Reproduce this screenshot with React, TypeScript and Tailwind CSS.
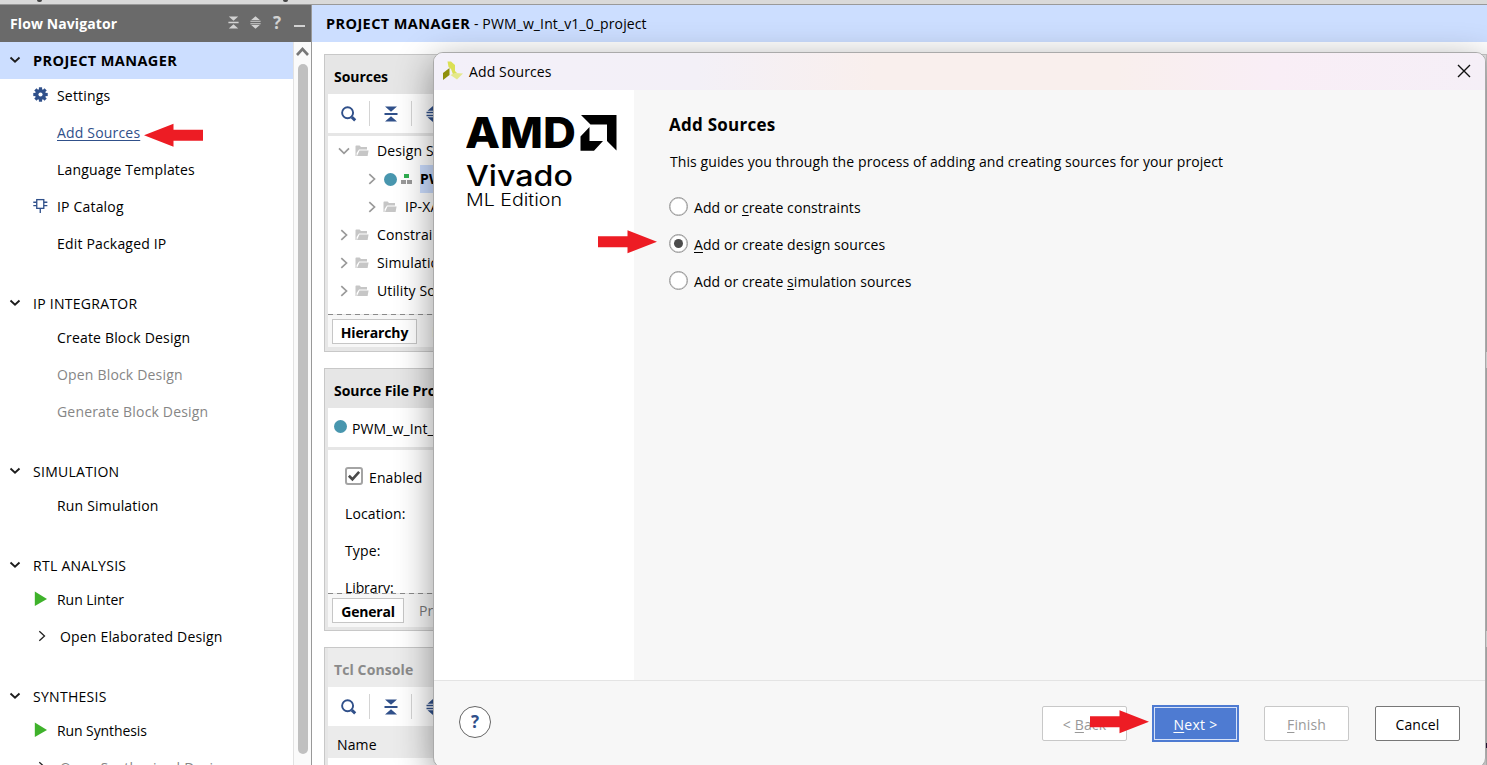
import React from "react";

const FONT = "font-['Open_Sans','Noto_Sans',sans-serif]";

function ChevronDown() {
  return (
    <svg className="ml-[9px] mr-[12px] w-3 h-3 shrink-0" viewBox="0 0 12 12" fill="none" stroke="#1c1c1c" strokeWidth="1.9">
      <path d="M1.5 3.5 L6 7.6 L10.5 3.5" />
    </svg>
  );
}

function Gear() {
  return (
    <svg width="15" height="15" viewBox="-8 -8 16 16" fill="#30508a">
      {[0, 45, 90, 135].map((a) => (
        <rect key={a} x="-1.7" y="-7.7" width="3.4" height="15.4" transform={`rotate(${a})`} />
      ))}
      <circle r="5.8" />
      <circle r="2.2" fill="#fff" />
    </svg>
  );
}

function Chip() {
  return (
    <svg width="16" height="16" viewBox="0 0 16 16" fill="none" stroke="#30508a" strokeWidth="1.4">
      <rect x="4" y="1.2" width="7.5" height="9.3" />
      <path d="M0.3 4H4M0.3 7.6H4M11.5 4H15.3M11.5 7.6H15.3M7.75 10.5V15.5" />
    </svg>
  );
}

function Play() {
  return (
    <svg width="14" height="16" viewBox="0 0 14 16">
      <path d="M0.8 0.5 L13 8 L0.8 15 Z" fill="#3fb22b" />
    </svg>
  );
}

function Right({ color = "#222", w = 1.3 }: { color?: string; w?: number }) {
  return (
    <svg className="shrink-0" width="8" height="12" viewBox="0 0 8 12" fill="none" stroke={color} strokeWidth={w}>
      <path d="M1.3 1.2 L6.5 6 L1.3 10.8" />
    </svg>
  );
}

function Collapse({ color, size }: { color: string; size: number }) {
  return (
    <svg className="shrink-0" width={size} height={size + 2} viewBox="0 0 14 16" fill={color}>
      <path d="M1 0.5H13L7 5.8Z M0.5 7.1H13.5V8.9H0.5Z M1 15.5H13L7 10.2Z" />
    </svg>
  );
}

function Expand({ color, size }: { color: string; size: number }) {
  return (
    <svg className="shrink-0" width={size} height={size + 2} viewBox="0 0 14 16" fill={color}>
      <path d="M7 0 L12.5 4.8 H1.5Z M0.5 5.7H13.5V7.2H0.5Z M0.5 8.8H13.5V10.3H0.5Z M1.5 11.2H12.5L7 16Z" />
    </svg>
  );
}

function Search() {
  return (
    <svg width="16" height="16" viewBox="0 0 16 16" fill="none" stroke="#30508a">
      <circle cx="6.6" cy="6.8" r="5.5" strokeWidth="1.9" />
      <path d="M10.8 11.2 L14.2 14.4" strokeWidth="3" />
    </svg>
  );
}

function Folder() {
  return (
    <svg className="shrink-0" width="14" height="12" viewBox="0 0 14 12" fill="#c6c6c6">
      <path d="M0.5 11V1.2Q0.5 0.5 1.2 0.5H4.6L6 2H12V4.4H4L1.6 8V11Z" />
      <path d="M4.5 5.4H13.6L12.6 11H2Z" />
    </svg>
  );
}

function Arrow({ left = false }: { left?: boolean }) {
  return (
    <svg width="59" height="24" viewBox="0 0 59 24" fill="#ed1c24" className={left ? "rotate-180" : ""}>
      <path d="M0 6.2H29.5V0.2L59 11.8L29.5 23.2V17.2H0Z" />
    </svg>
  );
}

function Head({ children, active = false }: { children: React.ReactNode; active?: boolean }) {
  return (
    <div className={"flex h-[37px] items-center pb-px " + (active ? "bg-[#ccdeff] text-[14.5px] font-bold tracking-[0.4px]" : "tracking-[0.28px]")}>
      <ChevronDown />
      <span className={active ? "mt-[2px]" : "mt-px"}>{children}</span>
    </div>
  );
}

function Item({ icon, children, cls = "", indent = false }: { icon?: React.ReactNode; children: React.ReactNode; cls?: string; indent?: boolean }) {
  return (
    <div className={"flex h-[37px] items-center tracking-[0.18px] " + cls}>
      <span className={"flex shrink-0 justify-center pb-0.5 " + (indent ? "ml-[34px] w-4 mr-[10px]" : "ml-[33px] w-[15px] mr-[9px]")}>{icon}</span>
      {children}
    </div>
  );
}

function Toolbar() {
  return (
    <div className="flex h-[39px] shrink-0 items-center bg-white">
      <span className="ml-[13px] w-7"><Search /></span>
      <span className="h-[25px] w-px bg-[#d4d4d4]" />
      <span className="ml-[14px] w-[27px]"><Collapse color="#30508a" size={14} /></span>
      <span className="h-[25px] w-px bg-[#d4d4d4]" />
      <span className="ml-[14px]"><Expand color="#30508a" size={14} /></span>
    </div>
  );
}

function Row({ children, pad = "pl-[9px]", open = false }: { children: React.ReactNode; pad?: string; open?: boolean }) {
  return (
    <div className={"flex h-7 items-center " + pad}>
      <span className="flex w-[18px] shrink-0 justify-center pr-[5px]">
        {open ? (
          <svg className="shrink-0" width="12" height="8" viewBox="0 0 12 8" fill="none" stroke="#999" strokeWidth="1.7"><path d="M1 1.3L6 6.3L11 1.3" /></svg>
        ) : (
          <Right color="#999" w={1.7} />
        )}
      </span>
      {children}
    </div>
  );
}

function Dashes() {
  return (
    <svg className="block h-px w-full shrink-0" preserveAspectRatio="none">
      <path d="M0 0.5H1160" stroke="#8a8a8a" strokeDasharray="5 4" />
    </svg>
  );
}

function Panel({ title, h, children, muted = false }: { title: string; h: string; children: React.ReactNode; muted?: boolean }) {
  return (
    <div className={"flex shrink-0 flex-col overflow-hidden border border-[#c8c8c8] bg-[#e6e6e6] px-[3px] pb-1 " + h}>
      <div className={"flex h-[39px] shrink-0 items-center pl-1.5 pt-1 font-bold " + (muted ? "bg-[#ececec] tracking-[0.1px] text-[#8a8a8a]" : "tracking-[-0.05px] text-black")}>{title}</div>
      {children}
    </div>
  );
}

function Radio({ on = false, children }: { on?: boolean; children: React.ReactNode }) {
  return (
    <div className="flex h-[37px] items-center">
      <span className="mb-[3px] mr-[6px] flex h-[19px] w-[19px] items-center justify-center rounded-full border-[1.5px] border-[#999] bg-white shadow-[inset_0_0_0_0.5px_#b0b0b0]">
        {on && <span className="h-[9px] w-[9px] rounded-full bg-[#4c4c4c]" />}
      </span>
      <span className="tracking-[0.08px]">{children}</span>
    </div>
  );
}

export default function App() {
  return (
    <div className={"relative h-[765px] w-[1487px] overflow-hidden bg-white text-[14px] leading-5 tracking-[0.12px] text-black " + FONT}>
      <div className="flex h-[5px] border-b border-[#999] bg-[#d9d9d9]">
        <span className="ml-[37px] h-[2px] w-[5px] rounded-b bg-[#444]" />
        <span className="ml-[241px] h-[2px] w-[5px] rounded-b bg-[#444]" />
      </div>
      <div className="flex h-[760px]">
        <aside className="flex w-[312px] shrink-0 flex-col border-r border-[#999]">
          <div className="flex h-[37px] shrink-0 items-center bg-[#6a6a6a] pl-[10px] font-bold tracking-[0.1px] text-white">
            <span className="w-[218px]">Flow Navigator</span>
            <span className="w-[22px] pb-0.5"><Collapse color="#d2d2d2" size={11} /></span>
            <span className="w-[22px] pb-0.5"><Expand color="#d2d2d2" size={11} /></span>
            <span className="w-[22px] pb-0.5 pl-px text-[17px] text-[#d2d2d2]">?</span>
            <span className="mt-[5px] h-[2px] w-[11px] bg-[#d2d2d2]" />
          </div>
          <div className="flex h-[723px]">
            <div className="w-[293px] overflow-hidden">
              <Head active>PROJECT MANAGER</Head>
              <div className="-mt-0.5 mb-[23px]">
                <Item icon={<Gear />}>Settings</Item>
                <Item cls="text-[#30508a]"><span className="underline underline-offset-2">Add Sources</span><span className="ml-1 mt-1"><Arrow left /></span></Item>
                <Item>Language Templates</Item>
                <Item icon={<Chip />}>IP Catalog</Item>
                <Item>Edit Packaged IP</Item>
              </div>
              <Head>IP INTEGRATOR</Head>
              <div className="-mt-[3px] mb-[23px]">
                <Item>Create Block Design</Item>
                <Item cls="text-[#868686]">Open Block Design</Item>
                <Item cls="text-[#868686]">Generate Block Design</Item>
              </div>
              <Head>SIMULATION</Head>
              <div className="-mt-[3px] mb-[23px]"><Item>Run Simulation</Item></div>
              <Head>RTL ANALYSIS</Head>
              <div className="-mt-[3px] mb-[23px]">
                <Item icon={<Play />}><span className="tracking-[-0.05px]">Run Linter</span></Item>
                <Item icon={<Right />} indent>Open Elaborated Design</Item>
              </div>
              <Head>SYNTHESIS</Head>
              <div className="-mt-[3px]">
                <Item icon={<Play />}><span className="tracking-[-0.1px]">Run Synthesis</span></Item>
                <Item icon={<Right />} indent cls="text-[#868686]">Open Synthesized Design</Item>
              </div>
            </div>
            <div className="flex w-[18px] flex-col items-center border-l border-[#e2e2e2] bg-[#fafafa]">
              <svg className="mt-1 shrink-0" width="13" height="11" viewBox="0 0 13 11" fill="none" stroke="#777" strokeWidth="2.6"><path d="M1 9L6.5 3L12 9" /></svg>
              <div className="mt-[7px] h-[690px] w-[10px] shrink-0 rounded-full bg-[#c0c0c0]" />
            </div>
          </div>
        </aside>
        <main className="flex w-[1175px] flex-col">
          <div className="flex h-[37px] shrink-0 items-center bg-[#ccdeff] pl-[14px]">
            <span className="text-[14.5px] font-bold tracking-[0.4px]">PROJECT MANAGER</span>
            <span className="whitespace-pre"> - PWM_w_Int_v1_0_project</span>
          </div>
          <div className="flex flex-col gap-4 pl-3 pt-3">
            <Panel title="Sources" h="h-[298px]">
              <Toolbar />
              <div className="mt-[3px] h-[178px] shrink-0 bg-white pt-px">
                <Row open><span className="mr-2"><Folder /></span>Design Sources</Row>
                <Row pad="pl-[37px]">
                  <span className="ml-px h-[13px] w-[13px] shrink-0 rounded-full bg-[#4896ae]" />
                  <svg className="ml-1 mr-[7px] shrink-0" width="12" height="11"><path d="M3 0H8V4H3Z" fill="#2fae50" /><path d="M0 6H5V10H0ZM6 6H11V10H6Z" fill="#999" /></svg>
                  <span className="h-7 bg-[#ccdeff] pt-1 font-bold">PWM_w_Int_v1_0</span>
                </Row>
                <Row pad="pl-[37px]"><span className="mr-2"><Folder /></span>IP-XACT</Row>
                <Row><span className="mr-2"><Folder /></span>Constraints</Row>
                <Row><span className="mr-2"><Folder /></span>Simulation Sources</Row>
                <Row><span className="mr-2"><Folder /></span>Utility Sources</Row>
              </div>
              <Dashes />
              <div className="flex h-8 shrink-0 items-center bg-[#f7f7f7] pl-1">
                <span className="flex h-[25px] w-[85px] items-center justify-center border border-[#c6c6c6] bg-white pt-[3px] font-bold tracking-[-0.15px]">Hierarchy</span>
                <span className="ml-[15px] pt-0.5 text-[#777]">IP Sources</span>
              </div>
            </Panel>
            <Panel title="Source File Properties" h="h-[263px]">
              <div className="flex h-[39px] shrink-0 items-center bg-white pl-1.5 pt-0.5">
                <span className="mb-1 mr-[5px] h-[13px] w-[13px] rounded-full bg-[#4896ae]" />
                <span>PWM_w_Int_v1_0.v</span>
              </div>
              <div className="mt-[3px] h-[143px] shrink-0 overflow-hidden bg-white pl-[17px] pt-[9px]">
                <div className="flex h-9 items-center">
                  <span className="mb-[3px] mr-[6px] h-[18px] w-[18px] rounded-[3px] border-2 border-[#a4a4a4]">
                    <svg width="14" height="14" viewBox="0 0 15 15" fill="none" stroke="#4a4a4a" strokeWidth="2.8"><path d="M2 7.2L5.8 11L13 3" /></svg>
                  </span>
                  <span className="mt-0.5">Enabled</span>
                </div>
                <div className="flex h-[37px] items-center">Location:</div>
                <div className="flex h-[37px] items-center">Type:</div>
                <div className="flex h-[37px] items-center tracking-[-0.1px]">Library:</div>
              </div>
              <Dashes />
              <div className="flex h-[33px] shrink-0 items-center bg-[#f7f7f7] pb-px pl-1">
                <span className="flex h-[25px] w-[72px] items-center justify-center border border-[#c6c6c6] bg-white pt-[3px] font-bold tracking-[-0.2px]">General</span>
                <span className="ml-[15px] pt-0.5 text-[#777]">Properties</span>
              </div>
            </Panel>
            <Panel title="Tcl Console" h="h-[130px]" muted>
              <Toolbar />
              <div className="flex h-8 shrink-0 items-center bg-[#ebebeb] pl-[9px] pt-1.5">Name</div>
              <div className="h-8 shrink-0 bg-white" />
            </Panel>
          </div>
        </main>
      </div>

      <section className="absolute left-[433px] top-[52px] flex h-[716px] w-[1053px] flex-col overflow-hidden rounded-[10px] border border-[#aaa] bg-[#f7f7f7] shadow-[0_10px_36px_rgba(0,0,0,0.42)]">
        <div className="flex h-[37px] shrink-0 items-center bg-[linear-gradient(90deg,#f3f0f9_0%,#f3f0f7_25%,#f9efed_42%,#f9efed_65%,#f9eef6_80%,#f5eff7_100%)] pl-[9px]">
          <svg className="mb-0.5 mr-[6px]" width="20" height="20" viewBox="0 0 20 20">
            <path d="M4.5 0.5L8 0.5L12 4V10L14 12L10 13.5L8 8L5.5 6Z" fill="#dbe055" />
            <path d="M0 12L6.5 7V14L0 19Z" fill="#8f900d" />
            <path d="M7.5 14L12 12L20 12.5L14 18.5Z" fill="#e4e88c" />
          </svg>
          <span className="flex-1">Add Sources</span>
          <svg className="mb-0.5 mr-[14px]" width="14" height="14" viewBox="0 0 14 14" stroke="#111" strokeWidth="1.4"><path d="M1 1L13 13M13 1L1 13" /></svg>
        </div>
        <div className="flex h-[590px] shrink-0">
          <div className="w-[200px] bg-white pl-8 pt-[25px]">
            <svg width="152" height="95" viewBox="0 0 152 95" fill="#000">
              <text x="-1" y="33" textLength="111" lengthAdjust="spacingAndGlyphs" className="font-[Inter] text-[43px] font-extrabold tracking-normal">AMD</text>
              <path d="M115 0H150.500V35.500L141 26V9.500H124.500Z" />
              <path d="M123.500 12V26H137L128 35.800H114.500V21.500Z" />
              <text x="0" y="70.5" textLength="107" lengthAdjust="spacingAndGlyphs" className="font-[Inter] text-[28.500px] font-medium tracking-normal">Vivado</text>
              <text x="0" y="91" textLength="96" lengthAdjust="spacingAndGlyphs" className="font-[Inter] text-[17px] font-light tracking-normal">ML Edition</text>
            </svg>
          </div>
          <div className="flex-1 pl-[35px] pt-6">
            <h1 className="text-[17px] font-bold leading-[22px] tracking-[0.25px]">Add Sources</h1>
            <p className="mt-4 pl-px tracking-[0.09px]">This guides you through the process of adding and creating sources for your project</p>
            <div className="mt-[17px]">
              <Radio>Add or <u className="underline-offset-2">c</u>reate constraints</Radio>
              <Radio on><u className="underline-offset-2">A</u>dd or create design sources</Radio>
              <Radio>Add or create <u className="underline-offset-2">s</u>imulation sources</Radio>
            </div>
          </div>
        </div>
        <div className="flex flex-1 items-start border-t border-[#e4e4e4] pt-6">
          <span className="ml-[25px] mt-px flex h-8 w-8 items-center justify-center rounded-full border border-[#666] bg-white text-[17px] font-bold text-[#30508a]">?</span>
          <span className="ml-[551px] mt-[1px] flex h-[35px] w-[85px] items-center justify-center rounded-[2px] border border-[#c8c8c8] bg-white pt-0.5 text-[#999]">&lt;&nbsp;<u className="underline-offset-2">B</u>ack</span>
          <span className="ml-[25px] flex h-[37px] w-[87px] bg-[#4e7bd2] p-[2px] text-white">
            <span className="flex flex-1 items-center justify-center border border-[#d7e2f8] pt-0.5 tracking-[0.3px]"><u className="underline-offset-2">N</u>ext &gt;</span>
          </span>
          <span className="ml-[25px] mt-[1px] flex h-[35px] w-[85px] items-center justify-center rounded-[2px] border border-[#c8c8c8] bg-white pt-0.5 text-[#999]"><u className="underline-offset-2">F</u>inish</span>
          <span className="ml-[26px] mt-[1px] flex h-[35px] w-[85px] items-center justify-center rounded-[2px] border border-[#777] bg-white pt-0.5">Cancel</span>
        </div>
      </section>

      <div className="absolute left-[598px] top-[230px]"><Arrow /></div>
      <div className="absolute left-[1090px] top-[710px]"><Arrow /></div>
      <span className="absolute left-[1486px] top-[743px] h-[5px] w-px bg-[#201030]" />
    </div>
  );
}
